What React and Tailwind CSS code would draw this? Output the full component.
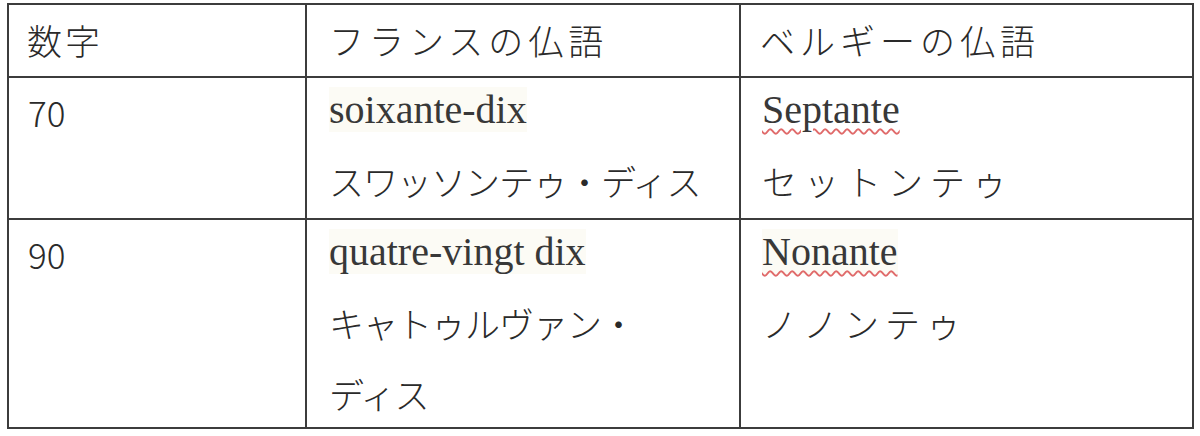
import React from "react";

const jp = "font-['Noto_Sans_CJK_JP','Noto_Sans_CJK_SC',sans-serif] font-light";
const serif = "font-['Liberation_Serif','Times_New_Roman',serif]";

function Line({ children, className = "" }) {
  return (
    <div className={`h-[71px] leading-[71px] whitespace-nowrap ${className}`}>
      {children}
    </div>
  );
}

function Latin({ children, spell = false, hl = true }) {
  return (
    <Line className={`${serif} text-[40px] text-[#383838]`}>
      <span
        className={`${hl ? "bg-[#fcfbf5]" : ""} ${
          spell
            ? "underline decoration-wavy decoration-[#e06a6a] decoration-[1.5px] underline-offset-[5px]"
            : ""
        }`}
      >
        {children}
      </span>
    </Line>
  );
}

function Jp({ children, track }) {
  return <Line className={`${jp} text-[35px] text-[#2a2a2a] ${track}`}>{children}</Line>;
}

export default function App() {
  return (
    <div className="w-[1200px] h-[436px] bg-white pt-[3px] pl-[7px]">
      <div className="w-[1187px] h-[426px] border-2 border-[#3c3c3c] grid grid-cols-[298px_434px_451px] grid-rows-[73px_142px_207px]">
        {/* header */}
        <div className="border-r-2 border-b-2 border-[#3c3c3c] pl-[18px] flex items-center">
          <div className="-mt-[3px]">
            <Jp track="tracking-[3px]">数字</Jp>
          </div>
        </div>
        <div className="border-r-2 border-b-2 border-[#3c3c3c] pl-[22px] flex items-center">
          <div className="-mt-[3px]">
            <Jp track="tracking-[5px]">フランスの仏語</Jp>
          </div>
        </div>
        <div className="border-b-2 border-[#3c3c3c] pl-[19px] flex items-center">
          <div className="-mt-[3px]">
            <Jp track="tracking-[5px]">ベルギーの仏語</Jp>
          </div>
        </div>

        {/* row 70 */}
        <div className="border-r-2 border-b-2 border-[#3c3c3c] pl-[19px]">
          <div className="-mt-[2px]">
            <Jp track="tracking-[0px]">70</Jp>
          </div>
        </div>
        <div className="border-r-2 border-b-2 border-[#3c3c3c] pl-[22px]">
          <div className="-mt-[4px]">
            <Latin>soixante-dix</Latin>
            <Jp track="tracking-[-1px]">スワッソンテゥ・ディス</Jp>
          </div>
        </div>
        <div className="border-b-2 border-[#3c3c3c] pl-[21px]">
          <div className="-mt-[4px]">
            <Latin spell hl={false}>Septante</Latin>
            <Jp track="tracking-[7px]">セットンテゥ</Jp>
          </div>
        </div>

        {/* row 90 */}
        <div className="border-r-2 border-[#3c3c3c] pl-[19px]">
          <div className="-mt-[2px]">
            <Jp track="tracking-[0px]">90</Jp>
          </div>
        </div>
        <div className="border-r-2 border-[#3c3c3c] pl-[22px]">
          <div className="-mt-[4px]">
            <Latin>quatre-vingt dix</Latin>
            <Jp track="tracking-[-1px]">キャトゥルヴァン・</Jp>
            <Jp track="tracking-[-1px]">ディス</Jp>
          </div>
        </div>
        <div className="pl-[21px]">
          <div className="-mt-[4px]">
            <Latin spell>Nonante</Latin>
            <Jp track="tracking-[6px]">ノノンテゥ</Jp>
          </div>
        </div>
      </div>
    </div>
  );
}
